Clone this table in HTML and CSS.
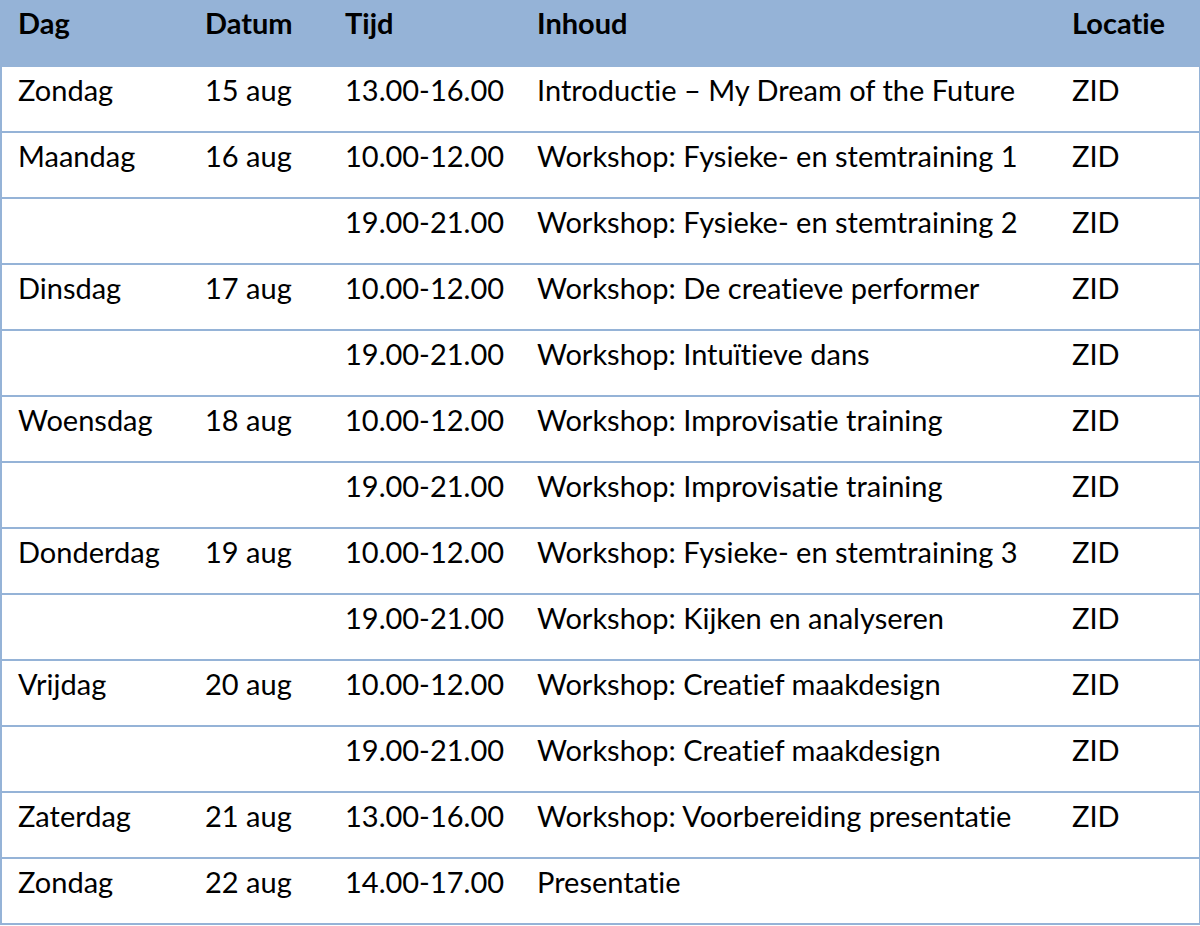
FILE: index.html
```html
<!DOCTYPE html>
<html lang="nl">
<head>
<meta charset="utf-8">
<title>Programma</title>
<link rel="stylesheet" href="styles.css">
</head>
<body>
<table class="schedule">
  <thead>
    <tr><th>Dag</th><th>Datum</th><th>Tijd</th><th>Inhoud</th><th>Locatie</th></tr>
  </thead>
  <tbody>
    <tr><td>Zondag</td><td>15 aug</td><td>13.00-16.00</td><td>Introductie – My Dream of the Future</td><td>ZID</td></tr>
    <tr><td>Maandag</td><td>16 aug</td><td>10.00-12.00</td><td>Workshop: Fysieke- en stemtraining 1</td><td>ZID</td></tr>
    <tr><td></td><td></td><td>19.00-21.00</td><td>Workshop: Fysieke- en stemtraining 2</td><td>ZID</td></tr>
    <tr><td>Dinsdag</td><td>17 aug</td><td>10.00-12.00</td><td>Workshop: De creatieve performer</td><td>ZID</td></tr>
    <tr><td></td><td></td><td>19.00-21.00</td><td>Workshop: Intuïtieve dans</td><td>ZID</td></tr>
    <tr><td>Woensdag</td><td>18 aug</td><td>10.00-12.00</td><td>Workshop: Improvisatie training</td><td>ZID</td></tr>
    <tr><td></td><td></td><td>19.00-21.00</td><td>Workshop: Improvisatie training</td><td>ZID</td></tr>
    <tr><td>Donderdag</td><td>19 aug</td><td>10.00-12.00</td><td>Workshop: Fysieke- en stemtraining 3</td><td>ZID</td></tr>
    <tr><td></td><td></td><td>19.00-21.00</td><td>Workshop: Kijken en analyseren</td><td>ZID</td></tr>
    <tr><td>Vrijdag</td><td>20 aug</td><td>10.00-12.00</td><td>Workshop: Creatief maakdesign</td><td>ZID</td></tr>
    <tr><td></td><td></td><td>19.00-21.00</td><td>Workshop: Creatief maakdesign</td><td>ZID</td></tr>
    <tr><td>Zaterdag</td><td>21 aug</td><td>13.00-16.00</td><td>Workshop: Voorbereiding presentatie</td><td>ZID</td></tr>
    <tr><td>Zondag</td><td>22 aug</td><td>14.00-17.00</td><td>Presentatie</td><td></td></tr>
  </tbody>
</table>
</body>
</html>
```
FILE: styles.css
```css
html, body {
  margin: 0;
  padding: 0;
  background: #ffffff;
}
.schedule {
  width: 1199px;
  border-collapse: collapse;
  table-layout: fixed;
  font-family: Lato, "Open Sans", sans-serif;
  font-size: 29px;
  font-variant-ligatures: none;
  color: #000;
  border-left: 2px solid #95b3d7;
  border-right: 2px solid #95b3d7;
  border-bottom: 2px solid #95b3d7;
}
.schedule th, .schedule td {
  height: 66px;
  box-sizing: border-box;
  padding: 5px 0 0 16px;
  vertical-align: top;
  text-align: left;
  line-height: 36px;
  white-space: nowrap;
}
.schedule th {
  height: 66px;
  background: #95b3d7;
  font-weight: 700;
  padding-top: 5px;
}
.schedule tbody tr {
  border-top: 2px solid #95b3d7;
}
.schedule th:nth-child(1) { width: 188px; }
.schedule th:nth-child(2) { width: 140px; }
.schedule th:nth-child(3) { width: 192px; }
.schedule th:nth-child(4) { width: 535px; }
.schedule th:nth-child(5) { width: 144px; }
```
